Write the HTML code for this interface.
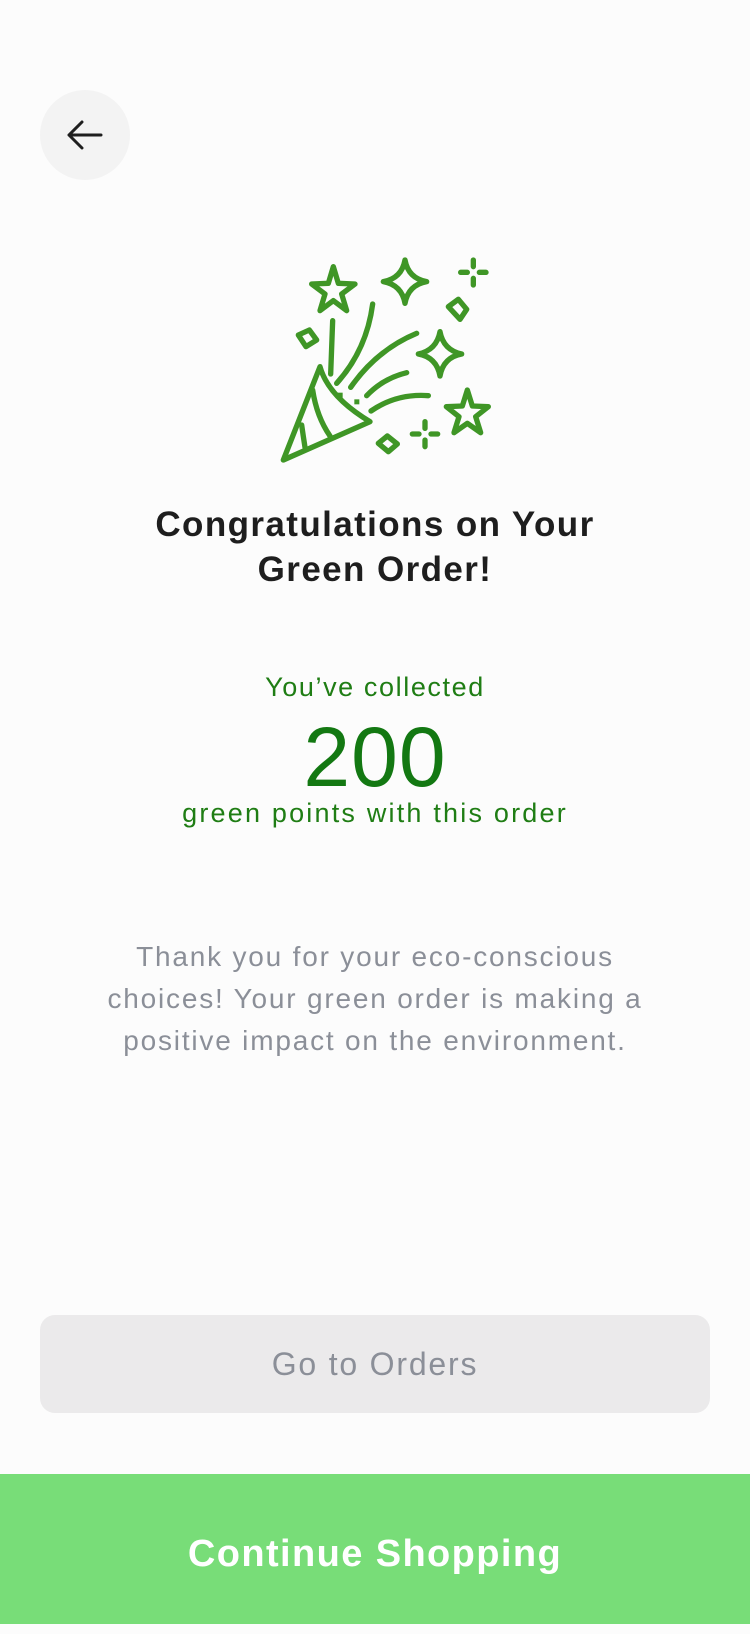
<!DOCTYPE html>
<html><head><meta charset="utf-8"><style>
*{margin:0;padding:0;box-sizing:border-box}
body{width:750px;height:1624px;background:#fcfcfc;position:relative;overflow:hidden;font-family:"Liberation Sans",sans-serif}
.c{position:absolute;left:0;width:750px;text-align:center}
</style></head><body>
<div style="position:absolute;left:40px;top:90px;width:90px;height:90px;border-radius:50%;background:#f3f3f3"></div>
<svg style="position:absolute;left:60px;top:115px" width="50" height="40" viewBox="60 115 50 40"><path d="M101 135H69M82 122L69 135L82 148" fill="none" stroke="#1e1e1e" stroke-width="3" stroke-linecap="round" stroke-linejoin="round"/></svg>
<svg style="position:absolute;left:270px;top:250px" width="230" height="220" viewBox="0 0 690 660"><g fill="none" stroke="#3f9626" stroke-width="16" stroke-linecap="round" stroke-linejoin="round">
<path d="M40 630L150 350Q175 440 300 515Z"/>
<path d="M128 420Q140 500 180 558"/>
<path d="M95 525Q100 560 105 592"/>
<path d="M190 50L205 100L255 102L215 132L230 182L190 152L150 182L165 132L125 102L175 100Z"/>
<path d="M405 30Q415 85 470 95Q415 105 405 160Q395 105 340 95Q395 85 405 30Z"/>
<path d="M510 245Q520 300 575 312Q520 322 510 378Q500 322 445 312Q500 300 510 245Z"/>
<path d="M592 420L607 468L655 470L617 500L632 548L592 520L552 548L567 500L529 470L577 468Z"/>
<path d="M610 30V50M610 85V105M572 67H592M628 67H648"/>
<path d="M465 515V535M465 570V590M427 552H447M483 552H503"/>
<path d="M535 170L565 148L590 178L570 208Z"/>
<path d="M85 255L118 240L140 270L108 290Z"/>
<path d="M325 580L352 558L382 582L355 605Z"/>
<path d="M188 212Q185 300 182 372"/>
<path d="M308 162Q290 300 200 400"/>
<path d="M440 250Q320 300 242 412"/>
<path d="M410 368Q340 385 290 437"/>
<path d="M475 437Q380 430 303 483"/>
</g><rect x="203" y="428" width="15" height="15" fill="#3f9626"/><rect x="253" y="448" width="15" height="15" fill="#3f9626"/></svg>
<div class="c" style="top:502px;font-size:35px;font-weight:bold;color:#1e1e1e;line-height:45px;letter-spacing:1.4px">Congratulations on Your<br>Green Order!</div>
<div class="c" style="top:672px;font-size:27px;color:#1f7d14;letter-spacing:1.6px">You’ve collected</div>
<div class="c" style="top:711px;font-size:84px;color:#137812;line-height:92px;letter-spacing:1px">200</div>
<div class="c" style="top:798px;font-size:27px;color:#1f7d14;letter-spacing:2.2px">green points with this order</div>
<div class="c" style="top:936px;font-size:28px;color:#8b8f98;line-height:42px;letter-spacing:1.8px">Thank you for your eco-conscious<br>choices! Your green order is making a<br>positive impact on the environment.</div>
<div style="position:absolute;left:40px;top:1315px;width:670px;height:98px;border-radius:15px;background:#ebeaeb;color:#8b8f98;font-size:32px;text-align:center;line-height:98px;letter-spacing:1.8px">Go to Orders</div>
<div style="position:absolute;left:0;top:1474px;width:750px;height:150px;background:#78dd78;color:#fff;font-size:38px;font-weight:bold;text-align:center;line-height:160px;letter-spacing:1.4px">Continue Shopping</div>
</body></html>
